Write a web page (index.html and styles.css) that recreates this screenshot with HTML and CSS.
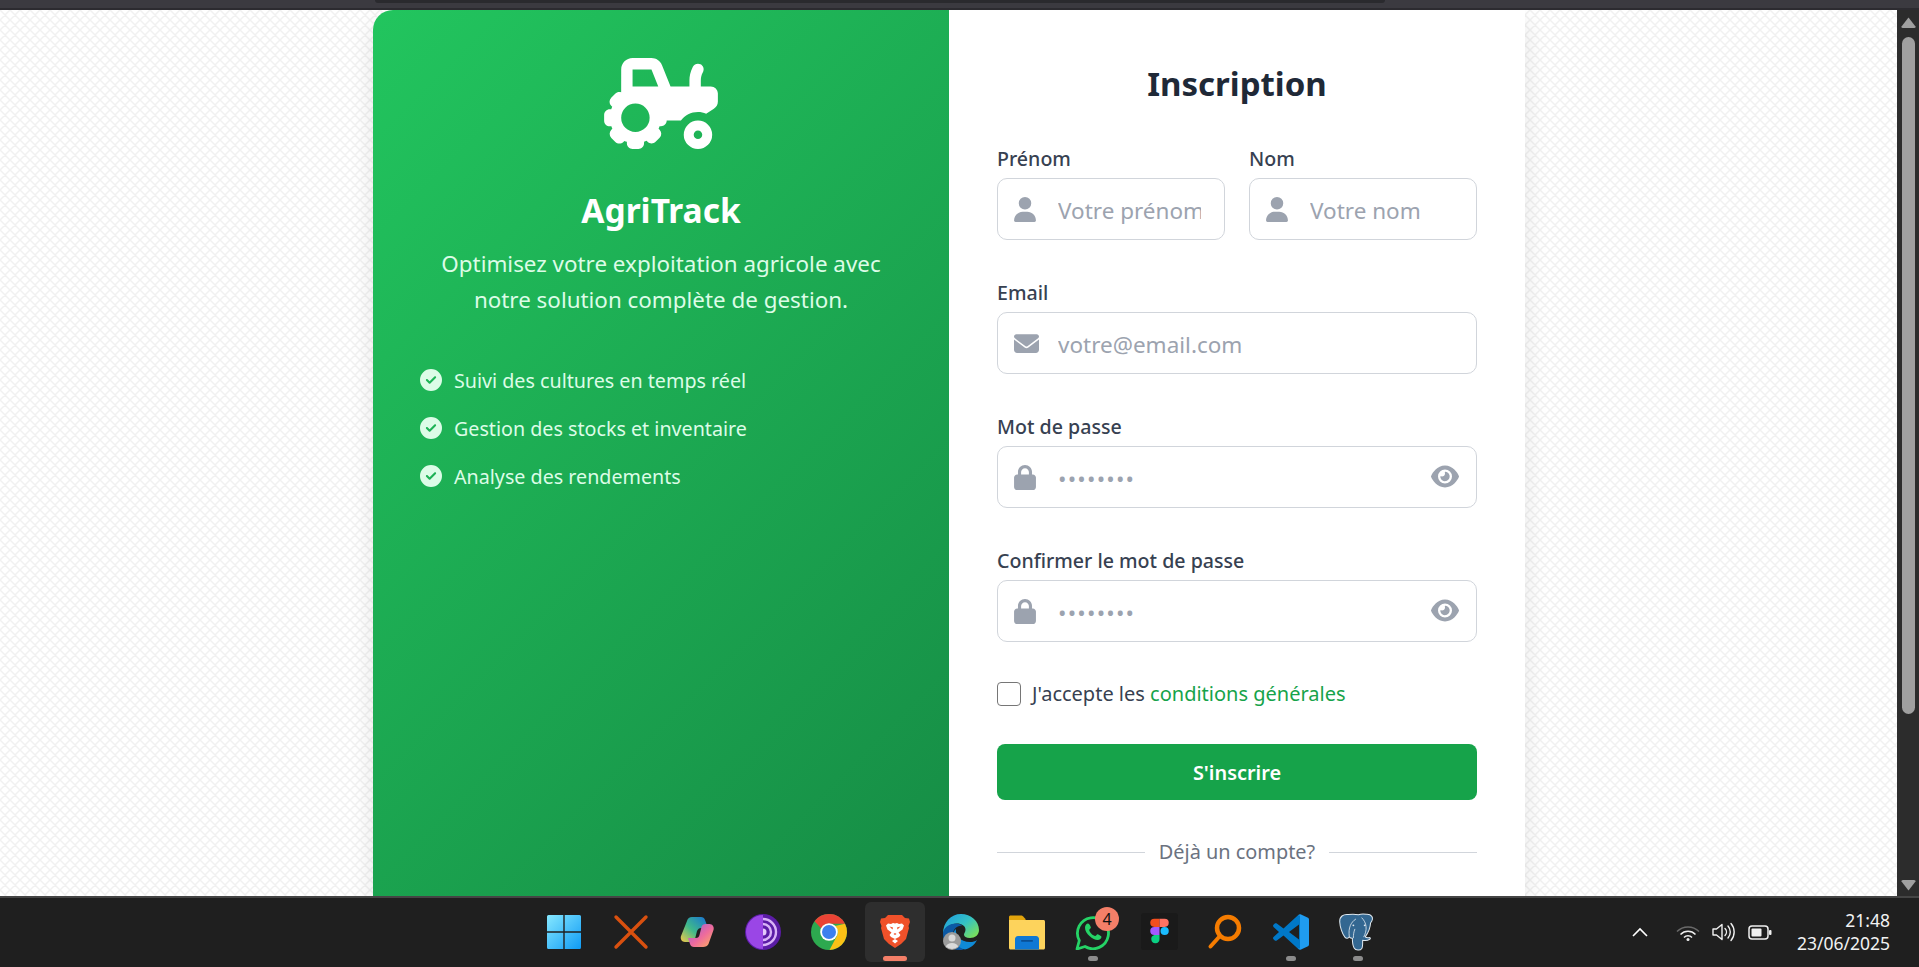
FILE: index.html
```html
<!DOCTYPE html>
<html lang="fr">
<head>
  <meta charset="UTF-8">
  <meta name="viewport" content="width=device-width, initial-scale=1.0">
  <title>AgriTrack - Inscription</title>
  <link rel="stylesheet" href="styles.css">
</head>
<body>
  <div class="top-bar"><div class="top-strip"></div></div>

  <div class="window">
    <main class="page">
      <div class="card">
        <section class="promo">
          <svg class="tractor" viewBox="0 0 640 512"><path fill-rule="evenodd" d="M96 64c0-35.300 28.700-64 64-64H266.300c26.200 0 49.700 15.900 59.400 40.200L373.700 160H480V126.200c0-24.800 5.800-49.300 16.900-71.600l2.500-5c7.900-15.800 27.100-22.200 42.900-14.300s22.200 27.100 14.300 42.900l-2.500 5c-6.700 13.300-10.100 28-10.100 42.900V160h56c22.100 0 40 17.900 40 40v45.400c0 16.500-8.500 31.900-22.600 40.700l-43.300 27.100c-14.200-5.900-29.800-9.200-46.100-9.200c-39.300 0-74.100 18.900-96 48H352c0 17.700-14.300 32-32 32h-8.200c-1.300 4.800-3.200 9.400-5.400 13.800l5.800 5.800c12.500 12.500 12.500 32.800 0 45.300l-22.600 22.600c-12.500 12.500-32.800 12.500-45.300 0l-5.800-5.800c-4.400 2.200-9 4.100-13.800 5.400V480c0 17.700-14.300 32-32 32H160c-17.700 0-32-14.300-32-32v-8.200c-4.800-1.300-9.400-3.200-13.800-5.400l-5.800 5.800c-12.500 12.500-32.800 12.500-45.300 0L40.500 449.600c-12.500-12.500-12.500-32.800 0-45.300l5.800-5.800c-2.200-4.400-4.100-9-5.400-13.800H32c-17.700 0-32-14.300-32-32V320c0-17.700 14.300-32 32-32h8.200c1.300-4.800 3.200-9.400 5.400-13.800l-5.800-5.800c-12.500-12.500-12.500-32.800 0-45.300l22.600-22.600c9-9 22.100-11.500 33.500-7.200L96 64zM160 64V160H304.600L266.300 64H160zM96 336a80 80 0 1 0 160 0a80 80 0 1 0-160 0zM448 432a80 80 0 1 1 160 0a80 80 0 1 1-160 0zM504 432a24 24 0 1 0 48 0a24 24 0 1 0-48 0z"/></svg>
          <h1>AgriTrack</h1>
          <p class="tagline">Optimisez votre exploitation agricole avec notre solution complète de gestion.</p>
          <ul class="features">
            <li><svg class="check" viewBox="0 0 512 512"><path d="M256 512A256 256 0 1 0 256 0a256 256 0 1 0 0 512zM369 209L241 337c-9.400 9.400-24.600 9.400-33.900 0l-64-64c-9.400-9.400-9.400-24.600 0-33.900s24.600-9.400 33.900 0l47 47L335 175c9.400-9.400 24.600-9.400 33.900 0s9.400 24.600 0 33.900z"/></svg>Suivi des cultures en temps réel</li>
            <li><svg class="check" viewBox="0 0 512 512"><path d="M256 512A256 256 0 1 0 256 0a256 256 0 1 0 0 512zM369 209L241 337c-9.400 9.400-24.600 9.400-33.900 0l-64-64c-9.400-9.400-9.400-24.600 0-33.900s24.600-9.400 33.900 0l47 47L335 175c9.400-9.400 24.600-9.400 33.900 0s9.400 24.600 0 33.900z"/></svg>Gestion des stocks et inventaire</li>
            <li><svg class="check" viewBox="0 0 512 512"><path d="M256 512A256 256 0 1 0 256 0a256 256 0 1 0 0 512zM369 209L241 337c-9.400 9.400-24.600 9.400-33.900 0l-64-64c-9.400-9.400-9.400-24.600 0-33.900s24.600-9.400 33.900 0l47 47L335 175c9.400-9.400 24.600-9.400 33.900 0s9.400 24.600 0 33.900z"/></svg>Analyse des rendements</li>
          </ul>
        </section>

        <section class="signup">
          <h2>Inscription</h2>
          <form>
            <div class="name-row">
              <div class="field">
                <label>Prénom</label>
                <div class="input-wrap">
                  <svg class="input-icon" viewBox="0 0 448 512"><path d="M224 256A128 128 0 1 0 224 0a128 128 0 1 0 0 256zm-45.700 48C79.800 304 0 383.800 0 482.300C0 498.700 13.300 512 29.700 512H418.300c16.400 0 29.700-13.300 29.700-29.700C448 383.800 368.200 304 269.700 304H178.300z"/></svg>
                  <input type="text" placeholder="Votre prénom">
                </div>
              </div>
              <div class="field">
                <label>Nom</label>
                <div class="input-wrap">
                  <svg class="input-icon" viewBox="0 0 448 512"><path d="M224 256A128 128 0 1 0 224 0a128 128 0 1 0 0 256zm-45.700 48C79.800 304 0 383.800 0 482.300C0 498.700 13.300 512 29.700 512H418.300c16.400 0 29.700-13.300 29.700-29.700C448 383.800 368.200 304 269.700 304H178.300z"/></svg>
                  <input type="text" placeholder="Votre nom">
                </div>
              </div>
            </div>

            <div class="field">
              <label>Email</label>
              <div class="input-wrap">
                <svg class="input-icon mail" viewBox="0 0 512 512"><path d="M48 64C21.500 64 0 85.500 0 112c0 15.100 7.100 29.300 19.200 38.400L236.800 313.600c11.400 8.500 27 8.500 38.400 0L492.800 150.400c12.100-9.100 19.200-23.300 19.200-38.400c0-26.500-21.500-48-48-48H48zM0 176V384c0 35.300 28.700 64 64 64H448c35.300 0 64-28.700 64-64V176L294.400 339.200c-22.800 17.100-54 17.100-76.800 0L0 176z"/></svg>
                <input type="email" placeholder="votre@email.com">
              </div>
            </div>

            <div class="field">
              <label>Mot de passe</label>
              <div class="input-wrap">
                <svg class="input-icon" viewBox="0 0 448 512"><path d="M144 144v48H304V144c0-44.200-35.800-80-80-80s-80 35.800-80 80zM80 192V144C80 64.500 144.500 0 224 0s144 64.500 144 144v48h16c35.300 0 64 28.700 64 64V448c0 35.300-28.700 64-64 64H64c-35.300 0-64-28.700-64-64V256c0-35.300 28.700-64 64-64H80z"/></svg>
                <input class="secret" type="password" placeholder="••••••••">
                <svg class="eye" viewBox="0 0 576 512"><path d="M288 32c-80.800 0-145.500 36.800-192.600 80.600C48.600 156 17.300 208 2.500 243.700c-3.300 7.900-3.300 16.700 0 24.600C17.300 304 48.600 356 95.400 399.400C142.500 443.200 207.200 480 288 480s145.500-36.800 192.600-80.600c46.800-43.500 78.100-95.400 93-131.100c3.300-7.900 3.300-16.700 0-24.600c-14.900-35.700-46.200-87.700-93-131.100C433.500 68.800 368.800 32 288 32zM144 256a144 144 0 1 1 288 0 144 144 0 1 1 -288 0zm144-64c0 35.300-28.700 64-64 64c-7.100 0-13.900-1.200-20.300-3.300c-5.500-1.800-11.900 1.600-11.700 7.400c.3 6.900 1.300 13.800 3.200 20.700c13.700 51.200 66.400 81.600 117.600 67.900s81.600-66.400 67.900-117.600c-11.100-41.500-47.800-69.400-88.600-71.100c-5.800-.2-9.200 6.100-7.400 11.700c2.100 6.400 3.300 13.200 3.300 20.300z"/></svg>
              </div>
            </div>

            <div class="field">
              <label>Confirmer le mot de passe</label>
              <div class="input-wrap">
                <svg class="input-icon" viewBox="0 0 448 512"><path d="M144 144v48H304V144c0-44.200-35.800-80-80-80s-80 35.800-80 80zM80 192V144C80 64.500 144.500 0 224 0s144 64.500 144 144v48h16c35.300 0 64 28.700 64 64V448c0 35.300-28.700 64-64 64H64c-35.300 0-64-28.700-64-64V256c0-35.300 28.700-64 64-64H80z"/></svg>
                <input class="secret" type="password" placeholder="••••••••">
                <svg class="eye" viewBox="0 0 576 512"><path d="M288 32c-80.800 0-145.500 36.800-192.600 80.600C48.600 156 17.300 208 2.500 243.700c-3.300 7.900-3.300 16.700 0 24.600C17.300 304 48.600 356 95.400 399.400C142.500 443.200 207.200 480 288 480s145.500-36.800 192.600-80.600c46.800-43.500 78.100-95.400 93-131.100c3.300-7.900 3.300-16.700 0-24.600c-14.900-35.700-46.200-87.700-93-131.100C433.500 68.800 368.800 32 288 32zM144 256a144 144 0 1 1 288 0 144 144 0 1 1 -288 0zm144-64c0 35.300-28.700 64-64 64c-7.100 0-13.900-1.200-20.300-3.300c-5.500-1.800-11.900 1.600-11.700 7.400c.3 6.900 1.300 13.800 3.200 20.700c13.700 51.200 66.400 81.600 117.600 67.900s81.600-66.400 67.900-117.600c-11.100-41.500-47.800-69.400-88.600-71.100c-5.800-.2-9.200 6.100-7.400 11.700c2.100 6.400 3.300 13.200 3.300 20.300z"/></svg>
              </div>
            </div>

            <div class="terms">
              <input type="checkbox">
              <span>J'accepte les <a href="#">conditions générales</a></span>
            </div>

            <button type="button" class="submit">S'inscrire</button>

            <div class="divider"><span>Déjà un compte?</span></div>
          </form>
        </section>
      </div>
    </main>

    <div class="scrollbar">
      <svg class="arrow" viewBox="0 0 15 11"><path d="M7.500 0.500 14.500 9.500Q15 11 13 11H2Q0 11 0.500 9.500Z"/></svg>
      <div class="thumb"></div>
      <svg class="arrow" viewBox="0 0 15 11"><path d="M7.500 10.500 14.500 1.500Q15 0 13 0H2Q0 0 0.500 1.500Z"/></svg>
    </div>
  </div>

  <footer class="taskbar">
    <div class="task-spacer"></div>
    <div class="task-icons">
      <div class="task-item">
        <svg viewBox="0 0 36 36"><defs><linearGradient id="win" x1="0" y1="0" x2="1" y2="1"><stop offset="0" stop-color="#86e8ff"/><stop offset="1" stop-color="#0f9bf5"/></linearGradient></defs><path fill="url(#win)" d="M1 2.500a1.500 1.500 0 0 1 1.500-1.500H17.300V17.300H1ZM18.700 1H33.500A1.500 1.500 0 0 1 35 2.500V17.300H18.700ZM1 18.700H17.300V35H2.500A1.500 1.500 0 0 1 1 33.500ZM18.700 18.700H35V33.500A1.500 1.500 0 0 1 33.500 35H18.700Z"/></svg>
      </div>
      <div class="task-item">
        <svg viewBox="0 0 36 36"><path d="M3 3 33 33M33 3 3 33" stroke="#d9500f" stroke-width="3.400" stroke-linecap="round" fill="none"/></svg>
      </div>
      <div class="task-item">
        <svg viewBox="0 0 36 36"><defs><linearGradient id="cpa" x1="0" y1="1" x2="1" y2="0"><stop offset="0" stop-color="#f7c948"/><stop offset=".45" stop-color="#3fb98a"/><stop offset="1" stop-color="#1670d8"/></linearGradient><linearGradient id="cpb" x1="0" y1="0" x2="1" y2="1"><stop offset="0" stop-color="#8f5fe0"/><stop offset=".55" stop-color="#ee6b9c"/><stop offset="1" stop-color="#fdb35c"/></linearGradient></defs><path fill="url(#cpa)" d="M13 3h9c2 0 3.500 1 4 3l3 8h-7c-2 0-3 1-4 3l-2 8c-.5 2-2 3-4 3H6c-3 0-5-3-4-6L8 7c.7-2.500 2.500-4 5-4Z"/><path fill="url(#cpb)" d="M24 33h-9c-2 0-3.500-1-4-3l-2-6h8c2 0 3-1 3.500-3l2-8c.5-2 2-3 4-3h4c3 0 5 3 4 6l-5 14c-.8 2-3 3-5.500 3Z"/></svg>
      </div>
      <div class="task-item">
        <svg viewBox="0 0 36 36"><circle cx="18" cy="18" r="18" fill="#5b1ca6"/><path d="M18 1A17 17 0 0 0 18 35Z" fill="#9a46e6"/><path d="M18 5a13 13 0 0 1 0 26M18 10a8 8 0 0 1 0 16" fill="none" stroke="#d9b3f7" stroke-width="2.400"/><path d="M18 14.500a3.500 3.500 0 0 1 0 7Z" fill="#e4c9fa"/></svg>
      </div>
      <div class="task-item">
        <svg viewBox="0 0 36 36"><circle cx="18" cy="18" r="18" fill="#2da94f"/><path d="M18 0A18 18 0 0 1 34 9.800H18A8.500 8.500 0 0 0 10.300 14.500L3.500 7.300A18 18 0 0 1 18 0Z" fill="#ea4335"/><path d="M34 9.800A18 18 0 0 1 18.500 36L25.500 22.700A8.500 8.500 0 0 0 24 12Z" fill="#fbc116"/><circle cx="18" cy="18" r="8.800" fill="#fff"/><circle cx="18" cy="18" r="7" fill="#3c80ee"/></svg>
      </div>
      <div class="task-item active">
        <svg class="brave" viewBox="0 0 30 33"><path fill="#f0512a" d="M8 0H22L25 3 29 3.500 30 7 28.500 11 29 13 26 24 21 29 15 33 9 29 4 24 1 13 1.500 11 0 7 1 3.500 5 3Z"/><path fill="#fff" d="M15 24 11 22 9.500 20 11.500 17.500 7.500 14.500 6 10.500 8 8.500 11 9 13 8 15 8.500 17 8 19 9 22 8.500 24 10.500 22.500 14.500 18.500 17.500 20.500 20 19 22ZM15 24 12 26 15 28.500 18 26Z"/><path fill="#f0512a" d="M9.500 11.500 13 12.500 12.500 14.500ZM20.500 11.500 17 12.500 17.500 14.500ZM13.500 19 15 20 16.500 19 15 18Z"/></svg>
        <span class="run-dot open"></span>
      </div>
      <div class="task-item">
        <svg viewBox="0 0 36 36"><defs><linearGradient id="edg" x1="0" y1="0" x2="1" y2=".8"><stop offset="0" stop-color="#1d9ae0"/><stop offset=".55" stop-color="#34c1c4"/><stop offset="1" stop-color="#7adf5a"/></linearGradient></defs><path fill="url(#edg)" d="M18 0C28 0 36 7 36 16c0 5-4 8-9 8-4 0-6-1.500-6-3.500 0-1.500 1.500-2 1.500-5 0-3.500-4-6-8.500-6C7.500 9.500 2 14 0 20 0 8 8 0 18 0Z"/><path fill="#0c59a4" d="M0 20c0-6 6-10.500 13-10.500 3 0 5 1 6 2-5 0-9 3.500-9 9 0 6 4.500 12 12 14-2 1-3.500 1.500-5 1.500C7 36 0 29 0 20Z"/><path fill="#0f8ad6" d="M22 35.500c-7-1.500-12-8-12-14 0-2.500 1-5 3-6.500-1 6 4 13 14 13 3 0 5-.5 7-2-2.500 5-7 8.500-12 9.500Z"/><circle cx="9" cy="27" r="9" fill="#9c9c9c"/><circle cx="9" cy="24" r="3.500" fill="#d9d9d9"/><path d="M2.800 32.500a6.500 5 0 0 1 12.400 0A9 9 0 0 1 2.800 32.500Z" fill="#d9d9d9"/></svg>
      </div>
      <div class="task-item">
        <svg viewBox="0 0 36 36"><path fill="#e2a40c" d="M0 3c0-1 .8-1.500 1.500-1.500h11c.6 0 1 .3 1.400.7L17 5.500 0 12Z"/><path fill="#fdd35c" d="M0 6h34.500c.8 0 1.500.7 1.500 1.500V34c0 .8-.7 1.500-1.500 1.500H1.500C.7 35.500 0 34.800 0 34Z"/><path fill="#0f78d4" d="M6 35.500V25c0-1.500 1.200-3 3-3h18c1.800 0 3 1.500 3 3v10.500Z"/><rect x="12" y="26" width="12" height="1.800" rx=".8" fill="#0a4f94"/></svg>
      </div>
      <div class="task-item">
        <svg viewBox="0 0 36 36"><path d="M2 35l2.300-8.500A15.500 15.500 0 1 1 10 32.500Z" fill="none" stroke="#25d366" stroke-width="2.800" stroke-linejoin="round"/><path fill="#25d366" d="M13 9.500c-1.500 0-3 1.800-3 4.200 0 3 2 6 4.500 8.300 2.700 2.500 5.700 3.900 8 3.900 2.300 0 4-1.500 4-3.200 0-.6-3.400-2.500-4-2.500-.7 0-1.500 1.800-2.300 1.800-2 0-6-4-6-6 0-.9 1.700-1.600 1.700-2.300 0-.6-1.500-4.200-2.900-4.200Z"/></svg>
        <span class="badge">4</span>
        <span class="run-dot"></span>
      </div>
      <div class="task-item">
        <svg class="figma" viewBox="0 0 36 36"><rect width="36" height="36" rx="3" fill="#1a1a1a"/><path fill="#f24e1e" d="M18 5.500h-5a4 4 0 0 0 0 8h5Z"/><path fill="#ff7262" d="M18 5.500h5a4 4 0 0 1 0 8h-5Z"/><path fill="#a259ff" d="M18 13.500h-5a4 4 0 0 0 0 8h5Z"/><circle cx="23" cy="17.500" r="4" fill="#1abcfe"/><path fill="#0acf83" d="M13 21.500h5v4a4 4 0 1 1-5-4Z"/></svg>
      </div>
      <div class="task-item">
        <svg viewBox="0 0 36 36"><circle cx="21" cy="14" r="11" fill="none" stroke="#f57c00" stroke-width="4.500"/><path d="M12.500 22.500 3.500 32.500" stroke="#f57c00" stroke-width="4" stroke-linecap="round"/></svg>
      </div>
      <div class="task-item">
        <svg viewBox="0 0 36 36"><path fill="#1f9cf0" d="M25 1.300c1-1 2-1.300 3-.8l7 3.300c.7.400 1 1 1 1.700v25c0 .7-.3 1.300-1 1.700l-7 3.300c-1 .5-2 .2-3-.8L27 26V10Z"/><path fill="#0078c8" fill-rule="evenodd" d="M25 1.300 10.500 14.500 3.800 9.500c-.6-.4-1.400-.4-2 .1L.5 10.800c-.6.600-.6 1.500 0 2.100L6 18 .5 23.100c-.6.600-.6 1.500 0 2.100l1.300 1.200c.6.500 1.400.5 2 .1l6.700-5L25 34.700c.3-.3 2 .3 2-.7V2c0-1-1.700-1-2-.7ZM26 10.500V25.500L16 18Z"/></svg>
        <span class="run-dot"></span>
      </div>
      <div class="task-item">
        <svg class="elephant" viewBox="0 0 36 36"><path fill="#336791" stroke="#dfe8ef" stroke-width="1" stroke-linejoin="round" d="M9 1C4 .5 .5 3 .7 8c.2 5 2.500 12 5 15 1.500 1.800 3.300 1.200 4.300-.2 1 1 2 1.400 3 1.300 0 3 .3 7 1.700 9.400 1.500 2.500 6 2.800 7.500.5 1-1.500.8-5 .8-8 2 .5 5 .3 7-1 1-.6.400-1.700-.8-1.500-1.700.3-3-.2-3.700-.8 2.500-3.500 5-9 5.200-13.500C35 3.500 31 .5 26.500.8c-3-.5-5-.5-7.500.5C16 .5 12.500.5 9 1Z"/><path d="M10 22.800c-.5-5-.2-8 1-11 1-2.500 3-5 5.500-6.500M14 24c0-3.500.3-6 1.500-9M24 23c1.500-3 2.800-6.500 2.300-10.500-.3-3-1.800-6-4.300-8.500" fill="none" stroke="#dfe8ef" stroke-width=".8"/><circle cx="14" cy="11.500" r=".9" fill="#dfe8ef"/><circle cx="25" cy="11.500" r=".9" fill="#dfe8ef"/></svg>
        <span class="run-dot"></span>
      </div>
    </div>
    <div class="tray">
      <svg class="tray-chevron" viewBox="0 0 16 10"><path d="M1 9 8 2l7 7" fill="none" stroke="#fff" stroke-width="1.600"/></svg>
      <svg class="tray-wifi" viewBox="0 0 24 17"><path d="M1 7.500a15.500 15.500 0 0 1 22 0" fill="none" stroke="#6a6a6a" stroke-width="1.500"/><path d="M4.500 10.500a10.500 10.500 0 0 1 15 0M8 13.500a5.500 5.500 0 0 1 8 0" fill="none" stroke="#f0f0f0" stroke-width="1.500"/><circle cx="12" cy="15.500" r="1.500" fill="#f0f0f0"/></svg>
      <svg class="tray-sound" viewBox="0 0 24 20"><path d="M1 7v6h3.500L10 17.500V2.500L4.500 7Z" fill="none" stroke="#f0f0f0" stroke-width="1.400" stroke-linejoin="round"/><path d="M13 6.500a5 5 0 0 1 0 7M16 4a9 9 0 0 1 0 12M19 1.500a13 13 0 0 1 0 17" fill="none" stroke="#f0f0f0" stroke-width="1.400" stroke-linecap="round"/></svg>
      <svg class="tray-battery" viewBox="0 0 24 15"><rect x="1" y="1" width="19" height="13" rx="3" fill="none" stroke="#f0f0f0" stroke-width="1.500"/><rect x="3.500" y="3.500" width="10" height="8" rx="1" fill="#f0f0f0"/><rect x="21" y="5" width="2.500" height="5" rx="1" fill="#f0f0f0"/></svg>
      <div class="clock">
        <div>21:48</div>
        <div>23/06/2025</div>
      </div>
    </div>
  </footer>
</body>
</html>
```

FILE: styles.css
```css
* {
  box-sizing: border-box;
}
html, body {
  height: 100%;
}
body {
  margin: 0;
  font-family: "Noto Sans", "Open Sans", sans-serif;
  display: flex;
  flex-direction: column;
  overflow: hidden;
  background-color: #1f1f1f;
}

.top-bar {
  height: 10px;
  padding-left: 375px;
  background-color: #3b3a40;
  border-bottom: 2px solid #2c2b30;
}
.top-strip {
  width: 1010px;
  height: 3px;
  background-color: #2a2a2e;
  border-radius: 0 0 4px 4px;
}

.window {
  height: 886px;
  display: flex;
}
.page {
  flex: 1;
  display: flex;
  justify-content: center;
  padding-left: 1px;
  overflow: hidden;
  background-color: #fff;
  background-image: url("data:image/svg+xml,%3Csvg xmlns='http://www.w3.org/2000/svg' width='10' height='10'%3E%3Cpath d='M-1 1 1 -1M-1 11 11 -1M9 11 11 9M-1 9 1 11M-1 -1 11 11M9 -1 11 1' stroke='%23f1f1f1' stroke-width='1.500'/%3E%3C/svg%3E");
  background-size: 10px 10px;
}
.card {
  width: 1152px;
  display: flex;
  background-color: #fff;
  border-radius: 20px 0 0 0;
  box-shadow: 0 10px 25px rgba(0, 0, 0, 0.1);
}

/* left panel */
.promo {
  width: 576px;
  padding: 48px 47px 0;
  color: #dcfce7;
  text-align: center;
  border-radius: 20px 0 0 0;
  background: linear-gradient(135deg, #22c55e, #168c45);
}
.tractor {
  display: block;
  width: 114px;
  height: 91px;
  margin: 0 auto;
  fill: #fff;
}
.promo h1 {
  margin: 41px 0 0;
  font-size: 33.5px;
  line-height: 40px;
  font-weight: 700;
  color: #fff;
}
.tagline {
  margin: 16px 0 0;
  font-size: 22.4px;
  line-height: 36px;
}
.features {
  list-style: none;
  margin: 38px 0 0;
  padding: 0;
  text-align: left;
  font-size: 19.7px;
}
.features li {
  display: flex;
  align-items: center;
  height: 48px;
}
.check {
  width: 22px;
  height: 22px;
  margin-right: 12px;
  fill: #dcfce7;
}

/* right panel */
.signup {
  width: 576px;
  padding: 55px 48px 0;
}
.signup h2 {
  margin: 0 0 43px;
  font-size: 33px;
  line-height: 38px;
  font-weight: 700;
  text-align: center;
  color: #1f2937;
}
.name-row {
  display: flex;
  gap: 24px;
}
.name-row .field {
  flex: 1;
  min-width: 0;
}
.field {
  margin-bottom: 40px;
}
.field label {
  display: block;
  margin-bottom: 6px;
  font-size: 19.6px;
  line-height: 26px;
  font-weight: 500;
  color: #374151;
}
.input-wrap {
  position: relative;
}
.input-wrap input {
  display: block;
  width: 100%;
  height: 62px;
  padding: 2px 23px 0 60px;
  font-family: inherit;
  font-size: 22.5px;
  color: #374151;
  background-color: #fff;
  border: 1.25px solid #d1d5db;
  border-radius: 10px;
  outline: none;
}
.input-wrap input::placeholder {
  color: #9ca3af;
  opacity: 1;
}
.input-wrap input.secret::placeholder {
  letter-spacing: 1.2px;
}
.input-icon {
  position: absolute;
  left: 17px;
  top: 19px;
  width: 22px;
  height: 25px;
  fill: #9ca3af;
}
.input-icon.mail {
  width: 25px;
}
.eye {
  position: absolute;
  right: 18px;
  top: 18px;
  width: 28px;
  height: 25px;
  fill: #9ca3af;
}

.terms {
  display: flex;
  align-items: center;
  gap: 11px;
  margin-top: -1px;
  font-size: 20px;
  line-height: 26px;
  color: #374151;
}
.terms input {
  appearance: none;
  width: 24px;
  height: 24px;
  margin: 0;
  background-color: #fff;
  border: 1.5px solid #767676;
  border-radius: 4px;
}
.terms a {
  color: #16a34a;
  text-decoration: none;
}

.submit {
  display: block;
  width: 100%;
  height: 56px;
  margin-top: 37px;
  font-family: inherit;
  font-size: 19.9px;
  font-weight: 600;
  color: #fff;
  background-color: #16a34a;
  border: none;
  border-radius: 8px;
}

.divider {
  display: flex;
  align-items: center;
  gap: 14px;
  margin-top: 38px;
  font-size: 19.9px;
  line-height: 28px;
  color: #6b7280;
}
.divider::before, .divider::after {
  content: "";
  flex: 1;
  height: 1px;
  background-color: #d1d5db;
}

/* fake browser scrollbar */
.scrollbar {
  width: 22px;
  flex-shrink: 0;
  display: flex;
  flex-direction: column;
  align-items: center;
  padding: 7px 0 5px;
  background-color: #2c2c2c;
}
.arrow {
  width: 15px;
  height: 11px;
  fill: #a0a0a0;
}
.thumb {
  width: 13px;
  height: 677px;
  margin: 9px 0 auto;
  background-color: #a0a0a0;
  border-radius: 7px;
}

/* windows taskbar */
.taskbar {
  flex: 1;
  display: grid;
  grid-template-columns: 1fr auto 1fr;
  padding: 4px 0 0 3px;
  color: #fff;
  background-color: #1f1f1f;
  border-top: 2px solid #454545;
}
.task-icons {
  display: flex;
  gap: 6.1px;
}
.task-item {
  position: relative;
  width: 60px;
  height: 60px;
  display: flex;
  align-items: center;
  justify-content: center;
  border-radius: 6px;
}
.task-item > svg {
  width: 36px;
  height: 36px;
  margin-top: -1px;
}
.task-item.active {
  background-color: #2e2e2e;
}
.task-item > svg.brave {
  width: 30px;
  height: 33px;
}
.task-item > svg.figma {
  width: 37px;
  height: 37px;
}
.task-item > svg.elephant {
  width: 37px;
  height: 38px;
}
.run-dot {
  position: absolute;
  left: 25px;
  bottom: 1px;
  width: 10px;
  height: 5px;
  background-color: #8c8c8c;
  border-radius: 3px;
}
.run-dot.open {
  left: 18px;
  width: 24px;
  background-color: #f47f68;
}
.badge {
  position: absolute;
  left: 32px;
  top: 5px;
  width: 24px;
  height: 24px;
  font-size: 16px;
  line-height: 24px;
  text-align: center;
  color: #111;
  background-color: #f47f68;
  border-radius: 50%;
}

.tray {
  display: flex;
  align-items: center;
  justify-content: flex-end;
  height: 60px;
  padding-right: 29px;
}
.tray-chevron {
  width: 16px;
  height: 10px;
  margin-right: 28px;
}
.tray-wifi {
  width: 24px;
  height: 17px;
  margin-right: 12px;
}
.tray-sound {
  width: 24px;
  height: 20px;
  margin-right: 12px;
}
.tray-battery {
  width: 24px;
  height: 15px;
  margin-right: 25px;
}
.clock {
  font-size: 17.5px;
  line-height: 23px;
  text-align: right;
  color: #f2f2f2;
}
```
